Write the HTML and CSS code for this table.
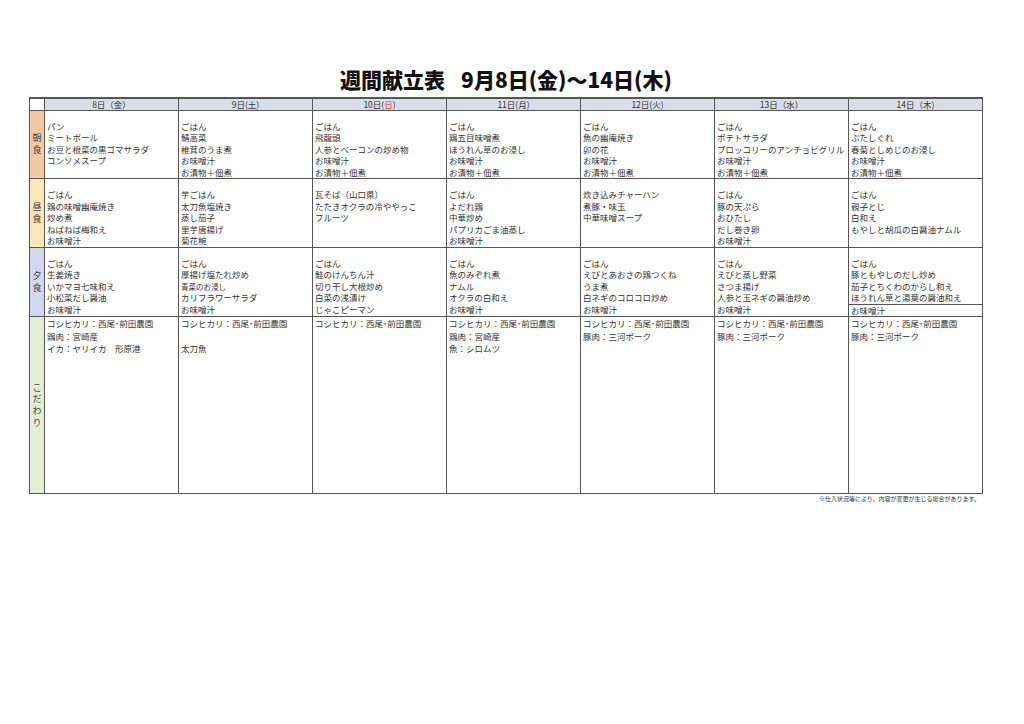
FILE: index.html
```html
<!DOCTYPE html>
<html lang="ja">
<head>
<meta charset="utf-8">
<title>週間献立表</title>
<link rel="stylesheet" href="styles.css">
</head>
<body>
<div class="page">
  <h1 class="title"><span>週間献立表</span><span class="gap"></span><span>9月8日(金)～14日(木)</span></h1>
  <table class="menu">
    <colgroup>
      <col class="c-label">
      <col class="c-day"><col class="c-day"><col class="c-day"><col class="c-day"><col class="c-day"><col class="c-day"><col class="c-day">
    </colgroup>
    <thead>
      <tr class="r-head">
        <th class="corner"></th>
        <th>8日（金）</th>
        <th>9日(土)</th>
        <th>10日(<span class="sun">日</span>)</th>
        <th>11日(月)</th>
        <th>12日(火)</th>
        <th>13日（水）</th>
        <th>14日（木)</th>
      </tr>
    </thead>
    <tbody>
      <tr class="r-meal r-b">
        <th class="lab lab-b"><span>朝</span><span>食</span></th>
        <td><div>パン</div><div>ミートボール</div><div>お豆と根菜の黒ゴマサラダ</div><div>コンソメスープ</div></td>
        <td><div>ごはん</div><div>鯖高菜</div><div>椎茸のうま煮</div><div>お味噌汁</div><div>お漬物＋佃煮</div></td>
        <td><div>ごはん</div><div>飛龍頭</div><div>人参とベーコンの炒め物</div><div>お味噌汁</div><div>お漬物＋佃煮</div></td>
        <td><div>ごはん</div><div>鶏五目味噌煮</div><div>ほうれん草のお浸し</div><div>お味噌汁</div><div>お漬物＋佃煮</div></td>
        <td><div>ごはん</div><div>魚の幽庵焼き</div><div>卯の花</div><div>お味噌汁</div><div>お漬物＋佃煮</div></td>
        <td><div>ごはん</div><div>ポテトサラダ</div><div>ブロッコリーのアンチョビグリル</div><div>お味噌汁</div><div>お漬物＋佃煮</div></td>
        <td><div>ごはん</div><div>ぶたしぐれ</div><div>春菊としめじのお浸し</div><div>お味噌汁</div><div>お漬物＋佃煮</div></td>
      </tr>
      <tr class="r-meal r-l">
        <th class="lab lab-l"><span>昼</span><span>食</span></th>
        <td><div>ごはん</div><div>鶏の味噌幽庵焼き</div><div>炒め煮</div><div>ねばねば梅和え</div><div>お味噌汁</div></td>
        <td><div>芋ごはん</div><div>太刀魚塩焼き</div><div>蒸し茄子</div><div>里芋唐揚げ</div><div>菊花椀</div></td>
        <td><div>瓦そば（山口県）</div><div>たたきオクラの冷ややっこ</div><div>フルーツ</div></td>
        <td><div>ごはん</div><div>よだれ鶏</div><div>中華炒め</div><div>パプリカごま油蒸し</div><div>お味噌汁</div></td>
        <td><div>炊き込みチャーハン</div><div>煮豚・味玉</div><div>中華味噌スープ</div></td>
        <td><div>ごはん</div><div>豚の天ぷら</div><div>おひたし</div><div>だし巻き卵</div><div>お味噌汁</div></td>
        <td><div>ごはん</div><div>親子とじ</div><div>白和え</div><div>もやしと胡瓜の白醤油ナムル</div></td>
      </tr>
      <tr class="r-meal r-d">
        <th class="lab lab-d"><span>夕</span><span>食</span></th>
        <td><div>ごはん</div><div>生姜焼き</div><div>いかマヨ七味和え</div><div>小松菜だし醤油</div><div>お味噌汁</div></td>
        <td><div>ごはん</div><div>厚揚げ塩たれ炒め</div><div class="small">青菜のお浸し</div><div>カリフラワーサラダ</div><div>お味噌汁</div></td>
        <td><div>ごはん</div><div>鮭のけんちん汁</div><div>切り干し大根炒め</div><div>白菜の浅漬け</div><div>じゃこピーマン</div></td>
        <td><div>ごはん</div><div>魚のみぞれ煮</div><div>ナムル</div><div>オクラの白和え</div><div>お味噌汁</div></td>
        <td><div>ごはん</div><div>えびとあおさの鶏つくね</div><div>うま煮</div><div>白ネギのコロコロ炒め</div><div>お味噌汁</div></td>
        <td><div>ごはん</div><div>えびと蒸し野菜</div><div>さつま揚げ</div><div>人参と玉ネギの醤油炒め</div><div>お味噌汁</div></td>
        <td><div>ごはん</div><div>豚ともやしのだし炒め</div><div>茄子とちくわのからし和え</div><div>ほうれん草と湯葉の醤油和え</div><div class="ruled">お味噌汁</div></td>
      </tr>
      <tr class="r-k">
        <th class="lab lab-k"><span>こ</span><span>だ</span><span>わ</span><span>り</span></th>
        <td><div>コシヒカリ：西尾･前田農園</div><div>鶏肉：宮崎産</div><div>イカ：ヤリイカ　形原港</div></td>
        <td><div>コシヒカリ：西尾･前田農園</div><div>&nbsp;</div><div>太刀魚</div></td>
        <td><div>コシヒカリ：西尾･前田農園</div></td>
        <td><div>コシヒカリ：西尾･前田農園</div><div>鶏肉：宮崎産</div><div>魚：シロムツ</div></td>
        <td><div>コシヒカリ：西尾･前田農園</div><div>豚肉：三河ポーク</div></td>
        <td><div>コシヒカリ：西尾･前田農園</div><div>豚肉：三河ポーク</div></td>
        <td><div>コシヒカリ：西尾･前田農園</div><div>豚肉：三河ポーク</div></td>
      </tr>
    </tbody>
  </table>
  <p class="note">※仕入状況等により、内容が変更が生じる場合があります。</p>
</div>
</body>
</html>
```

FILE: styles.css
```css
* { box-sizing: border-box; }
html, body { margin: 0; padding: 0; background: #fff; }
body {
  font-family: "Noto Sans CJK JP", "Noto Sans", sans-serif;
  color: #333;
}
.page {
  width: 954px;
  margin-left: 29px;
}
.title {
  margin: 0;
  height: 97px;
  padding-top: 64px;
  display: flex;
  justify-content: center;
  font-size: 21px;
  line-height: 30px;
  font-weight: 900;
  color: #111;
  letter-spacing: 0;
}
.title .gap { width: 16px; }
.menu {
  width: 954px;
  border-collapse: collapse;
  table-layout: fixed;
  border-top: 2px solid #555;
  border-bottom: 1px solid #555;
}
.c-label { width: 15px; }
.c-day { width: 134px; }
.menu th, .menu td {
  border: 1px solid #555;
  padding: 0;
}
.r-head th {
  height: 12px;
  background: #d9dee8;
  font-weight: 400;
  font-size: 8.5px;
  line-height: 10px;
  text-align: center;
  color: #333;
}
.r-head .corner { background: #fff; }
.sun { color: #e23a2f; }
.menu td {
  vertical-align: top;
  font-size: 8.5px;
  line-height: 11.5px;
  padding-left: 2px;
  white-space: nowrap;
  overflow: hidden;
}
.r-meal td { padding-top: 10px; }
.r-b td, .r-b th { height: 68px; }
.r-l td, .r-l th { height: 67px; }
.r-d td, .r-d th { height: 68px; }
.r-k td, .r-k th { height: 177px; }
.r-k td { padding-top: 0; line-height: 12.5px; }
.small { font-size: 7.5px; }
.ruled {
  border-top: 1px solid #555;
  margin-left: -2px;
  padding-left: 2px;
}
.lab {
  font-weight: 400;
  font-size: 9px;
  line-height: 12px;
  color: #444;
  text-align: center;
  vertical-align: middle;
}
.lab span { display: block; height: 12px; }
.lab-b { background: #f6c9a5; }
.lab-l { background: #fce8b6; }
.lab-d { background: #d1d9ef; }
.lab-k { background: #e2eed8; }
.lab-k span { height: 11.7px; line-height: 11.7px; }
.note {
  margin: 1px 0 0;
  text-align: right;
  padding-right: 3px;
  font-size: 6px;
  line-height: 8px;
  color: #333;
}
```
